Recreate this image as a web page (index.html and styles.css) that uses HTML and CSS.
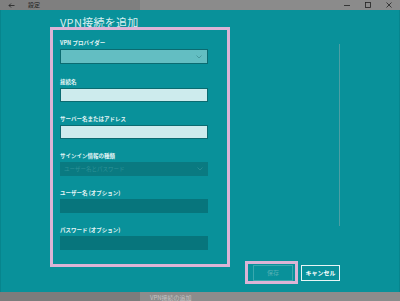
FILE: index.html
```html
<!DOCTYPE html>
<html lang="ja">
<head>
<meta charset="utf-8">
<title>VPN接続を追加</title>
<link rel="stylesheet" href="styles.css">
</head>
<body>
<div class="titlebar">
  <div class="tb-left">
    <svg class="tb-back" width="7" height="5" viewBox="0 0 7 5"><path d="M6.5 2.5H1M3 0.5L1 2.5L3 4.5" fill="none" stroke="#222" stroke-width="0.8"/></svg>
    <span class="tb-title">設定</span>
  </div>
  <div class="tb-right">
    <svg class="tb-ctl" width="6" height="6" viewBox="0 0 6 6"><path d="M0 3.5H6" stroke="#222" stroke-width="0.8"/></svg>
    <svg class="tb-ctl" width="6" height="6" viewBox="0 0 6 6"><rect x="0.5" y="0.5" width="5" height="5" fill="none" stroke="#222" stroke-width="0.8"/></svg>
    <svg class="tb-ctl" width="6" height="6" viewBox="0 0 6 6"><path d="M0.5 0.5L5.5 5.5M5.5 0.5L0.5 5.5" stroke="#222" stroke-width="0.8"/></svg>
  </div>
</div>
<div class="main">
  <div class="toprow">
    <div class="form">
      <h1 class="heading">VPN接続を追加</h1>
      <div class="group first">
        <div class="label">VPN プロバイダー</div>
        <div class="field select">
          <svg class="chev" width="6" height="4" viewBox="0 0 6 4"><path d="M0.5 0.5L3 3L5.5 0.5" fill="none" stroke="#3f8f93" stroke-width="0.8"/></svg>
        </div>
      </div>
      <div class="group">
        <div class="label">接続名</div>
        <div class="field input"></div>
      </div>
      <div class="group">
        <div class="label">サーバー名またはアドレス</div>
        <div class="field input"></div>
      </div>
      <div class="group">
        <div class="label">サインイン情報の種類</div>
        <div class="field disabled-select">
          <span class="ph">ユーザー名とパスワード</span>
          <svg class="chev" width="6" height="4" viewBox="0 0 6 4"><path d="M0.5 0.5L3 3L5.5 0.5" fill="none" stroke="#2f9197" stroke-width="0.8"/></svg>
        </div>
      </div>
      <div class="group">
        <div class="label">ユーザー名 (オプション)</div>
        <div class="field disabled"></div>
      </div>
      <div class="group">
        <div class="label">パスワード (オプション)</div>
        <div class="field disabled"></div>
      </div>
      <div class="highlight"></div>
    </div>
    <div class="scrollbar"></div>
  </div>
  <div class="buttons">
    <div class="btn save">保存</div>
    <div class="btn cancel">キャンセル</div>
  </div>
</div>
<div class="bottombar">
  <div class="bb-left"></div>
  <div class="bb-right"><span class="bb-text">VPN接続の追加</span></div>
</div>
</body>
</html>
```
FILE: styles.css
```css
* { box-sizing: border-box; }
html, body { margin: 0; padding: 0; }
body {
  width: 400px;
  height: 301px;
  overflow: hidden;
  font-family: "Noto Sans CJK JP", "Noto Sans", sans-serif;
  background: #09919a;
}
.titlebar {
  height: 10px;
  display: flex;
}
.tb-left {
  width: 140px;
  background: #7f7f7f;
  display: flex;
  align-items: center;
  padding-left: 8px;
}
.tb-back { display: block; }
.tb-title {
  margin-left: 13px;
  font-size: 6px;
  line-height: 10px;
  color: #222;
}
.tb-right {
  flex: 1;
  background: #8b8b8b;
  display: flex;
  justify-content: flex-end;
  align-items: center;
  padding-right: 8px;
  gap: 15px;
}
.tb-ctl { display: block; }
.main {
  height: 282px;
  background: #09919a;
  border-left: 1px solid #07858d;
  border-right: 1px solid #07858d;
  display: flex;
  flex-direction: column;
}
.toprow {
  display: flex;
  align-items: flex-start;
}
.form {
  position: relative;
  margin-left: 59px;
  width: 148px;
}
.heading {
  margin: 5px 0 0;
  font-size: 11px;
  line-height: 14px;
  font-weight: normal;
  color: #d8eff0;
  letter-spacing: 0.3px;
  white-space: nowrap;
}
.group { margin-top: 13px; }
.group.first { margin-top: 10px; }
.group.first + .group { margin-top: 14px; }
.label {
  height: 8px;
  font-size: 5.5px;
  line-height: 8px;
  font-weight: bold;
  color: #e6f5f6;
  white-space: nowrap;
  margin-bottom: 2px;
}
.field {
  height: 14px;
  width: 148px;
  position: relative;
  display: flex;
  align-items: center;
  padding-left: 4px;
}
.select {
  height: 15px;
  background: #63bec2;
  border: 1px solid #0b6b71;
}
.input {
  background: #cdebed;
  border: 1px solid #0b6b71;
}
.disabled-select {
  background: #0a7a81;
}
.disabled {
  background: #07757c;
}
.chev {
  position: absolute;
  right: 5px;
  top: 5px;
}
.ph {
  font-size: 5.5px;
  line-height: 8px;
  color: #2f9298;
  white-space: nowrap;
}
.highlight {
  position: absolute;
  left: -10px;
  top: 17px;
  width: 180px;
  height: 240px;
  border: 3px solid #dcb4d6;
  pointer-events: none;
}
.scrollbar {
  margin-left: 131px;
  margin-top: 34px;
  width: 1px;
  height: 182px;
  background: #4c9fa4;
}
.buttons {
  display: flex;
  justify-content: flex-end;
  gap: 8px;
  padding-right: 59px;
  margin-top: 15px;
}
.btn {
  height: 16px;
  font-size: 6px;
  line-height: 14px;
  text-align: center;
  white-space: nowrap;
}
.save {
  position: relative;
  width: 40px;
  border: 1px solid #3aa8ae;
  color: #56b0b5;
}
.save::after {
  content: "";
  position: absolute;
  left: -9px;
  right: -6px;
  top: -5px;
  bottom: -4px;
  border: 3px solid #dcb4d6;
}
.cancel {
  width: 39px;
  border: 1px solid #e6f5f6;
  color: #ffffff;
  font-weight: bold;
}
.bottombar {
  height: 9px;
  display: flex;
}
.bb-left {
  width: 140px;
  background: #7c7c7c;
}
.bb-right {
  flex: 1;
  background: #8c8c8c;
  padding-left: 10px;
  overflow: hidden;
}
.bb-text {
  display: block;
  font-size: 6px;
  line-height: 7px;
  margin-top: 2px;
  color: #c4c4c4;
  white-space: nowrap;
}
```
